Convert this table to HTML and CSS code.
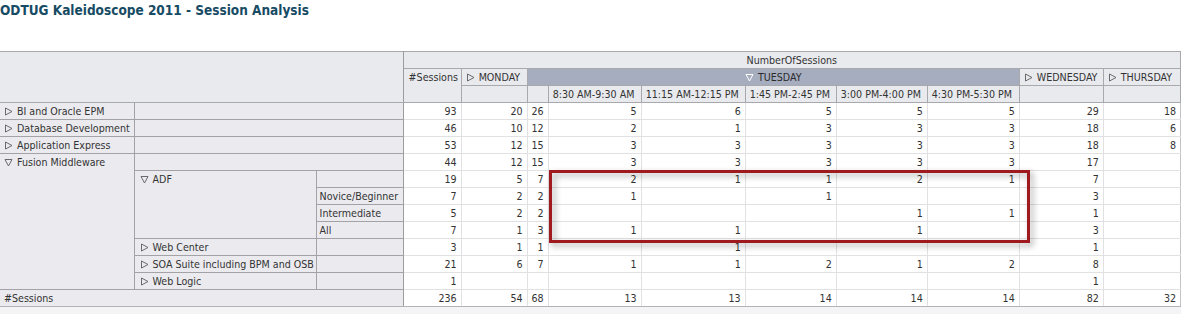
FILE: index.html
```html
<!DOCTYPE html>
<html>
<head>
<meta charset="utf-8">
<link rel="stylesheet" href="styles.css">
</head>
<body>
<div class="page">
  <h1 class="title">ODTUG Kaleidoscope 2011 - Session Analysis</h1>
  <div class="pivot">
    <table class="grid">
      <colgroup>
        <col class="w-c1"><col class="w-c2"><col class="w-c3">
        <col class="w-d1"><col class="w-d2"><col class="w-d3">
        <col class="w-d4"><col class="w-d5"><col class="w-d6"><col class="w-d7"><col class="w-d8">
        <col class="w-d9"><col class="w-d10">
      </colgroup>
      <thead>
        <tr>
          <th class="corner" colspan="3" rowspan="3"></th>
          <th class="measure" colspan="10">NumberOfSessions</th>
        </tr>
        <tr>
          <th class="hdr top" rowspan="2">#Sessions</th>
          <th class="hdr"><span class="tri"><svg width="9" height="9" viewBox="0 0 9 9"><path d="M1.5 1 L8 4.5 L1.5 8 Z" fill="none" stroke="#6a6a6a"/></svg></span>MONDAY</th>
          <th class="hdr tue" colspan="6"><span class="tri"><svg width="9" height="9" viewBox="0 0 9 9"><path d="M1 1.5 H8 L4.5 8 Z" fill="none" stroke="#ffffff"/></svg></span>TUESDAY</th>
          <th class="hdr"><span class="tri"><svg width="9" height="9" viewBox="0 0 9 9"><path d="M1.5 1 L8 4.5 L1.5 8 Z" fill="none" stroke="#6a6a6a"/></svg></span>WEDNESDAY</th>
          <th class="hdr"><span class="tri"><svg width="9" height="9" viewBox="0 0 9 9"><path d="M1.5 1 L8 4.5 L1.5 8 Z" fill="none" stroke="#6a6a6a"/></svg></span>THURSDAY</th>
        </tr>
        <tr>
          <th class="hdr"></th>
          <th class="hdr"></th>
          <th class="hdr">8:30 AM-9:30 AM</th>
          <th class="hdr">11:15 AM-12:15 PM</th>
          <th class="hdr">1:45 PM-2:45 PM</th>
          <th class="hdr">3:00 PM-4:00 PM</th>
          <th class="hdr">4:30 PM-5:30 PM</th>
          <th class="hdr"></th>
          <th class="hdr"></th>
        </tr>
      </thead>
      <tbody>
        <tr>
          <th class="rh"><span class="tri"><svg width="9" height="9" viewBox="0 0 9 9"><path d="M1.5 1 L8 4.5 L1.5 8 Z" fill="none" stroke="#6a6a6a"/></svg></span>BI and Oracle EPM</th>
          <th class="rh edge" colspan="2"></th>
          <td>93</td><td>20</td><td>26</td><td>5</td><td>6</td><td>5</td><td>5</td><td>5</td><td>29</td><td>18</td>
        </tr>
        <tr>
          <th class="rh"><span class="tri"><svg width="9" height="9" viewBox="0 0 9 9"><path d="M1.5 1 L8 4.5 L1.5 8 Z" fill="none" stroke="#6a6a6a"/></svg></span>Database Development</th>
          <th class="rh edge" colspan="2"></th>
          <td>46</td><td>10</td><td>12</td><td>2</td><td>1</td><td>3</td><td>3</td><td>3</td><td>18</td><td>6</td>
        </tr>
        <tr>
          <th class="rh"><span class="tri"><svg width="9" height="9" viewBox="0 0 9 9"><path d="M1.5 1 L8 4.5 L1.5 8 Z" fill="none" stroke="#6a6a6a"/></svg></span>Application Express</th>
          <th class="rh edge" colspan="2"></th>
          <td>53</td><td>12</td><td>15</td><td>3</td><td>3</td><td>3</td><td>3</td><td>3</td><td>18</td><td>8</td>
        </tr>
        <tr>
          <th class="rh top" rowspan="8"><span class="tri"><svg width="9" height="9" viewBox="0 0 9 9"><path d="M1 1.5 H8 L4.5 8 Z" fill="none" stroke="#6a6a6a"/></svg></span>Fusion Middleware</th>
          <th class="rh edge" colspan="2"></th>
          <td>44</td><td>12</td><td>15</td><td>3</td><td>3</td><td>3</td><td>3</td><td>3</td><td>17</td><td></td>
        </tr>
        <tr>
          <th class="rh top lvl2" rowspan="4"><span class="tri"><svg width="9" height="9" viewBox="0 0 9 9"><path d="M1 1.5 H8 L4.5 8 Z" fill="none" stroke="#6a6a6a"/></svg></span>ADF</th>
          <th class="rh edge lvl3"></th>
          <td>19</td><td>5</td><td>7</td><td>2</td><td>1</td><td>1</td><td>2</td><td>1</td><td>7</td><td></td>
        </tr>
        <tr>
          <th class="rh edge lvl3">Novice/Beginner</th>
          <td>7</td><td>2</td><td>2</td><td>1</td><td></td><td>1</td><td></td><td></td><td>3</td><td></td>
        </tr>
        <tr>
          <th class="rh edge lvl3">Intermediate</th>
          <td>5</td><td>2</td><td>2</td><td></td><td></td><td></td><td>1</td><td>1</td><td>1</td><td></td>
        </tr>
        <tr>
          <th class="rh edge lvl3">All</th>
          <td>7</td><td>1</td><td>3</td><td>1</td><td>1</td><td></td><td>1</td><td></td><td>3</td><td></td>
        </tr>
        <tr>
          <th class="rh lvl2"><span class="tri"><svg width="9" height="9" viewBox="0 0 9 9"><path d="M1.5 1 L8 4.5 L1.5 8 Z" fill="none" stroke="#6a6a6a"/></svg></span>Web Center</th>
          <th class="rh edge lvl3"></th>
          <td>3</td><td>1</td><td>1</td><td></td><td>1</td><td></td><td></td><td></td><td>1</td><td></td>
        </tr>
        <tr>
          <th class="rh lvl2"><span class="tri"><svg width="9" height="9" viewBox="0 0 9 9"><path d="M1.5 1 L8 4.5 L1.5 8 Z" fill="none" stroke="#6a6a6a"/></svg></span>SOA Suite including BPM and OSB</th>
          <th class="rh edge lvl3"></th>
          <td>21</td><td>6</td><td>7</td><td>1</td><td>1</td><td>2</td><td>1</td><td>2</td><td>8</td><td></td>
        </tr>
        <tr>
          <th class="rh lvl2"><span class="tri"><svg width="9" height="9" viewBox="0 0 9 9"><path d="M1.5 1 L8 4.5 L1.5 8 Z" fill="none" stroke="#6a6a6a"/></svg></span>Web Logic</th>
          <th class="rh edge lvl3"></th>
          <td>1</td><td></td><td></td><td></td><td></td><td></td><td></td><td></td><td>1</td><td></td>
        </tr>
        <tr class="total">
          <th class="rh edge" colspan="3">#Sessions</th>
          <td>236</td><td>54</td><td>68</td><td>13</td><td>13</td><td>14</td><td>14</td><td>14</td><td>82</td><td>32</td>
        </tr>
      </tbody>
    </table>
    <div class="highlight"></div>
  </div>
</div>
</body>
</html>
```
FILE: styles.css
```css
html, body {
  margin: 0;
  padding: 0;
  background: #ffffff;
}

.page {
  font-family: "DejaVu Sans Condensed", "Liberation Sans", Arial, sans-serif;
  font-stretch: condensed;
  font-size: 10.6px;
  color: #333333;
}

.title {
  margin: 0;
  padding: 2px 0 0 0;
  height: 51px;
  box-sizing: border-box;
  font-family: "DejaVu Sans Condensed", "Liberation Sans", Arial, sans-serif;
  font-stretch: condensed;
  font-size: 13.5px;
  line-height: 16px;
  font-weight: bold;
  color: #174b64;
}

.pivot {
  position: relative;
  width: 1181px;
  background: #f4f4f6;
  padding-bottom: 8px;
}

.grid {
  border-collapse: collapse;
  table-layout: fixed;
  width: 1181px;
}

.w-c1 { width: 134px; }
.w-c2 { width: 182px; }
.w-c3 { width: 87px; }
.w-d1 { width: 58px; }
.w-d2 { width: 66px; }
.w-d3 { width: 21px; }
.w-d4 { width: 93px; }
.w-d5 { width: 104px; }
.w-d6 { width: 91px; }
.w-d7 { width: 91px; }
.w-d8 { width: 92px; }
.w-d9 { width: 84px; }
.w-d10 { width: 77px; }

.grid tr {
  height: 17px;
}

.grid th,
.grid td {
  padding: 0 4px;
  height: 16px;
  line-height: 16px;
  white-space: nowrap;
  overflow: hidden;
  font-weight: normal;
  vertical-align: middle;
}

.grid thead th {
  background: #e9eaee;
  border: 1px solid #a9a9ad;
  text-align: left;
}

.grid thead th.corner {
  border-left: none;
  border-right: 1px solid #9c9c9c;
}

.grid thead th.measure {
  text-align: center;
  border-right: 1px solid #a9a9ad;
}

.grid thead th.top {
  vertical-align: top;
  padding-left: 5px;
}

.grid thead th.tue {
  background: #a6adbf;
  text-align: center;
  color: #2b2b2b;
}

.tri {
  display: inline-block;
  width: 9px;
  height: 9px;
  margin-right: 4px;
  vertical-align: -1px;
}

.tri svg {
  display: block;
}

.grid tbody th.rh {
  background: #ebebef;
  border: 1px solid #a3a3a7;
  border-left: none;
  text-align: left;
  padding-left: 4px;
}

.grid tbody th.lvl2 {
  padding-left: 5px;
}

.grid tbody th.lvl3 {
  padding-left: 3px;
}

.grid tbody th.top {
  vertical-align: top;
}

.grid tbody th.edge {
  border-right: 1px solid #9c9c9c;
}

.grid tbody td {
  background: #ffffff;
  border: 1px solid #e1e1e4;
  text-align: right;
  padding-right: 4px;
  padding-left: 0;
}

.grid tbody td:last-child {
  border-right: 1px solid #c4c4c8;
}

.grid tbody tr.total td,
.grid tbody tr.total th {
  border-bottom: 1px solid #b4b4b8;
}

.highlight {
  position: absolute;
  left: 549px;
  top: 119px;
  width: 475px;
  height: 67px;
  border: 3px solid #9e1a1f;
  filter: drop-shadow(3px 3px 3px rgba(0, 0, 0, 0.35));
}
```
